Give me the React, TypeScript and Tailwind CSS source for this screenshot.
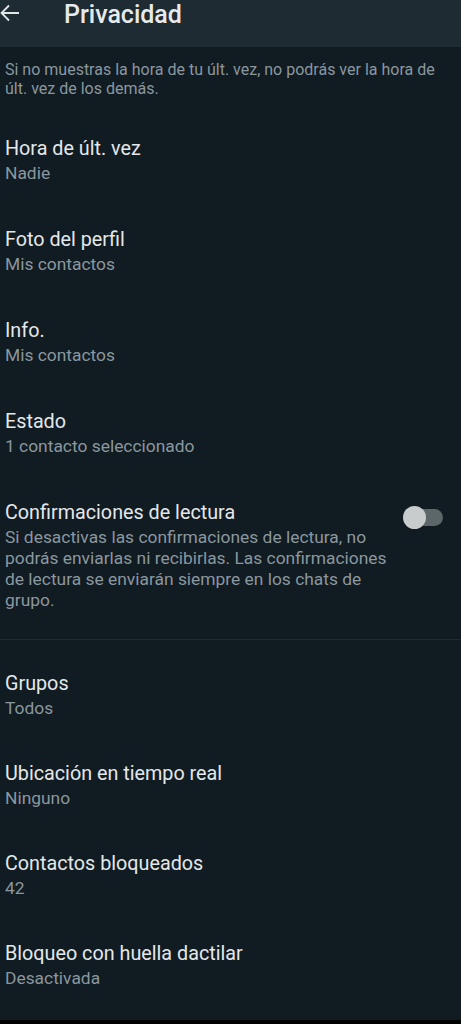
import React from "react"

type Item = { title: string; value: string }

const topItems: Item[] = [
  { title: "Hora de últ. vez", value: "Nadie" },
  { title: "Foto del perfil", value: "Mis contactos" },
  { title: "Info.", value: "Mis contactos" },
  { title: "Estado", value: "1 contacto seleccionado" },
]

const bottomItems: Item[] = [
  { title: "Grupos", value: "Todos" },
  { title: "Ubicación en tiempo real", value: "Ninguno" },
  { title: "Contactos bloqueados", value: "42" },
  { title: "Bloqueo con huella dactilar", value: "Desactivada" },
]

function Row({ item, tall = true }: { item: Item; tall?: boolean }) {
  return (
    <div className={`${tall ? "h-[91px]" : "h-[90px]"} pt-[23px] pl-[5px]`}>
      <div className="text-[19.75px] leading-[25px] text-[#e3e8eb]">{item.title}</div>
      <div className="mt-[2px] text-[17.4px] leading-[21px] text-[#8a979f]">{item.value}</div>
    </div>
  )
}

export default function App() {
  return (
    <div
      className="flex h-[1024px] w-[461px] flex-col overflow-hidden bg-[#111b22]"
      style={{ fontFamily: "Roboto, 'Noto Sans', sans-serif" }}
    >
      {/* app bar */}
      <div className="flex h-[47px] shrink-0 items-start bg-[#1f2b33]">
        <svg width="20" height="20" viewBox="0 0 20 20" className="mt-[3px]">
          <path d="M19 10H1.5M9 2.5L1.5 10L9 17.5" fill="none" stroke="#dfe4e7" strokeWidth="1.8" />
        </svg>
        <div className="ml-[44px] text-[25px] font-medium leading-[30px] text-[#e6eaec]">Privacidad</div>
      </div>

      <div className="flex-1">
        <div className="pl-[5px] pr-3 pt-[13px] pb-[15px] text-[16px] leading-[19px] text-[#8a979f]">
          Si no muestras la hora de tu últ. vez, no podrás ver la hora de últ. vez de los demás.
        </div>

        {topItems.map((it) => (
          <Row key={it.title} item={it} />
        ))}

        {/* read receipts */}
        <div className="flex pl-[5px] pt-[23px] pb-[28px]">
          <div className="w-[392px]">
            <div className="text-[19.75px] leading-[25px] text-[#e3e8eb]">Confirmaciones de lectura</div>
            <div className="mt-[2px] text-[17.4px] leading-[21px] text-[#8a979f]">
              Si desactivas las confirmaciones de lectura, no podrás enviarlas ni recibirlas. Las confirmaciones de lectura se enviarán siempre en los chats de grupo.
            </div>
          </div>
          <div className="relative mt-[6px] ml-[6px] h-[23px] w-[40px]">
            <div className="absolute top-[3px] left-[6px] h-[17px] w-[34px] rounded-full bg-[#5d6669]" />
            <div className="absolute top-0 left-0 h-[23px] w-[23px] rounded-full bg-[#c9cccd]" />
          </div>
        </div>

        <div className="h-px bg-[#1f2a31]" />

        <div className="pt-[8px]">
          {bottomItems.map((it) => (
            <Row key={it.title} item={it} tall={false} />
          ))}
        </div>
      </div>

      <div className="h-[4px] shrink-0 bg-black" />
    </div>
  )
}
